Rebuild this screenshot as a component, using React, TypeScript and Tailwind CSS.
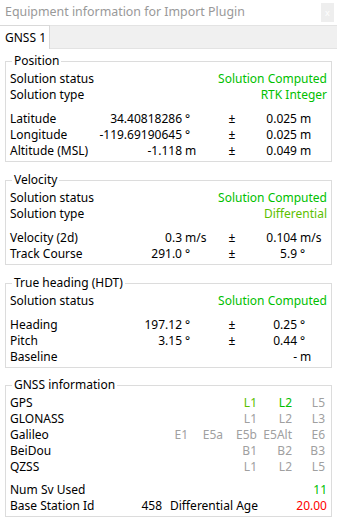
import type { ReactNode } from "react";

const GREEN = "text-[#00c000]";
const LIME = "text-[#5cc000]";
const GRAY = "text-[#a0a0a0]";

function Group({
  title,
  className = "",
  children,
}: {
  title: string;
  className?: string;
  children: ReactNode;
}) {
  return (
    <fieldset
      className={`mx-[5px] border border-[#dcdcdc] px-[4px] pt-[2px] pb-[2px] ${className}`}
    >
      <legend className="ml-[2px] h-[16px] px-[2px] leading-[16px]">
        {title}
      </legend>
      {children}
    </fieldset>
  );
}

function StatusRow({
  label,
  value,
  color = GREEN,
}: {
  label: string;
  value: string;
  color?: string;
}) {
  return (
    <div className="flex h-[16px] justify-between leading-[16px]">
      <span>{label}</span>
      <span className={color}>{value}</span>
    </div>
  );
}

function DataRow({
  label,
  value,
  unit,
  err,
  errUnit,
}: {
  label: string;
  value?: string;
  unit?: string;
  err: string;
  errUnit: string;
}) {
  return (
    <div className="flex h-[16px] whitespace-nowrap leading-[16px]">
      <span className="w-[82px] shrink-0">{label}</span>
      <span className="w-[90px] shrink-0 text-right">{value}</span>
      <span className="w-[36px] shrink-0 pl-[3px]">{unit}</span>
      <span className="w-[28px] shrink-0 text-center">{value ? "±" : ""}</span>
      <span className="w-[51px] shrink-0 text-right">{err}</span>
      <span className="pl-[3px]">{errUnit}</span>
    </div>
  );
}

const colWidths = ["w-[34px]", "w-[35px]", "w-[34px]", "w-[35px]", "w-[33px]"];

function BandRow({
  label,
  bands,
}: {
  label: string;
  bands: ({ text: string; color?: string } | null)[];
}) {
  return (
    <div className="flex h-[16px] whitespace-nowrap leading-[16px]">
      <span className="w-[144px] shrink-0">{label}</span>
      {bands.map((band, i) => (
        <span key={i} className={`${colWidths[i]} shrink-0 text-right ${band?.color ?? GRAY}`}>
          {band?.text}
        </span>
      ))}
    </div>
  );
}

export default function App() {
  return (
    <div className="h-[521px] w-[337px] overflow-hidden bg-white font-['Noto_Sans',sans-serif] text-[12px] text-black">
      {/* title bar */}
      <div className="flex h-[25px] items-start justify-between">
        <span className="pl-[5px] text-[12.4px] leading-[24px] text-[#999999]">
          Equipment information for Import Plugin
        </span>
        <span className="mt-[3px] mr-[3px] flex h-[19px] w-[13px] items-center justify-center bg-[#eeeeee] text-[9px] leading-none text-white">
          x
        </span>
      </div>

      {/* tabs */}
      <div className="flex h-[24px] bg-[#f0f0f0]">
        <div className="flex w-[50px] items-center border-t border-r border-[#d9d9d9] bg-white pl-[5px]">
          GNSS 1
        </div>
        <div className="flex-1 border-t border-b border-[#e3e3e3]" />
      </div>

      <Group title="Position" className="mt-[4px]">
        <StatusRow label="Solution status" value="Solution Computed" />
        <StatusRow label="Solution type" value="RTK Integer" />
        <div className="h-[8px]" />
        <DataRow label="Latitude" value="34.40818286" unit="°" err="0.025" errUnit="m" />
        <DataRow label="Longitude" value="-119.69190645" unit="°" err="0.025" errUnit="m" />
        <DataRow label="Altitude (MSL)" value="-1.118" unit="m" err="0.049" errUnit="m" />
      </Group>

      <Group title="Velocity" className="mt-[10px]">
        <StatusRow label="Solution status" value="Solution Computed" />
        <StatusRow label="Solution type" value="Differential" color={LIME} />
        <div className="h-[8px]" />
        <DataRow label="Velocity (2d)" value="0.3" unit="m/s" err="0.104" errUnit="m/s" />
        <DataRow label="Track Course" value="291.0" unit="°" err="5.9" errUnit="°" />
      </Group>

      <Group title="True heading (HDT)" className="mt-[10px]">
        <StatusRow label="Solution status" value="Solution Computed" />
        <div className="h-[8px]" />
        <DataRow label="Heading" value="197.12" unit="°" err="0.25" errUnit="°" />
        <DataRow label="Pitch" value="3.15" unit="°" err="0.44" errUnit="°" />
        <DataRow label="Baseline" err="-" errUnit="m" />
      </Group>

      <Group title="GNSS information" className="mt-[9px]">
        <BandRow
          label="GPS"
          bands={[null, null, { text: "L1", color: LIME }, { text: "L2", color: GREEN }, { text: "L5" }]}
        />
        <BandRow label="GLONASS" bands={[null, null, { text: "L1" }, { text: "L2" }, { text: "L3" }]} />
        <BandRow
          label="Galileo"
          bands={[{ text: "E1" }, { text: "E5a" }, { text: "E5b" }, { text: "E5Alt" }, { text: "E6" }]}
        />
        <BandRow label="BeiDou" bands={[null, null, { text: "B1" }, { text: "B2" }, { text: "B3" }]} />
        <BandRow label="QZSS" bands={[null, null, { text: "L1" }, { text: "L2" }, { text: "L5" }]} />
        <div className="h-[7px]" />
        <StatusRow label="Num Sv Used" value="11" />
        <div className="flex h-[16px] whitespace-nowrap leading-[16px]">
          <span className="w-[112px] shrink-0">Base Station Id</span>
          <span className="w-[40px] shrink-0 text-right">458</span>
          <span className="flex-1 pl-[8px]">Differential Age</span>
          <span className="text-[#ff0000]">20.00</span>
        </div>
      </Group>
    </div>
  );
}
